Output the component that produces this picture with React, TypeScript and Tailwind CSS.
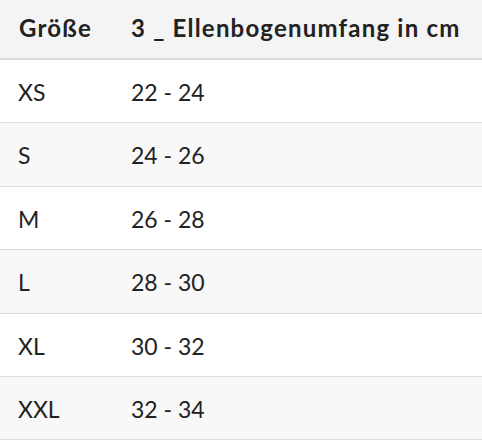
const rows = [
  { size: "XS", range: "22 - 24" },
  { size: "S", range: "24 - 26" },
  { size: "M", range: "26 - 28" },
  { size: "L", range: "28 - 30" },
  { size: "XL", range: "30 - 32" },
  { size: "XXL", range: "32 - 34" },
];

const App = () => {
  return (
    <div className="w-[482px] h-[440px] overflow-hidden bg-white font-['Lato',sans-serif] text-[#222]">
      <div className="flex items-center h-[60px] pl-[19px] pb-[2px] bg-[#f4f4f4] border-b-2 border-[#dcdcdc] text-[24px] font-bold tracking-[1.2px]">
        <div className="w-[112px]">Größe</div>
        <div>3 _ Ellenbogenumfang in cm</div>
      </div>
      {rows.map((row, i) => (
        <div
          key={row.size}
          className={
            "flex items-center h-[63.4px] pl-[18px] pt-[2px] border-b border-[#dcdcdc] text-[23px] " +
            (i % 2 === 1 ? "bg-[#f8f8f8]" : "bg-white")
          }
        >
          <div className="w-[113px]">{row.size}</div>
          <div>{row.range}</div>
        </div>
      ))}
    </div>
  );
};

export default App;
